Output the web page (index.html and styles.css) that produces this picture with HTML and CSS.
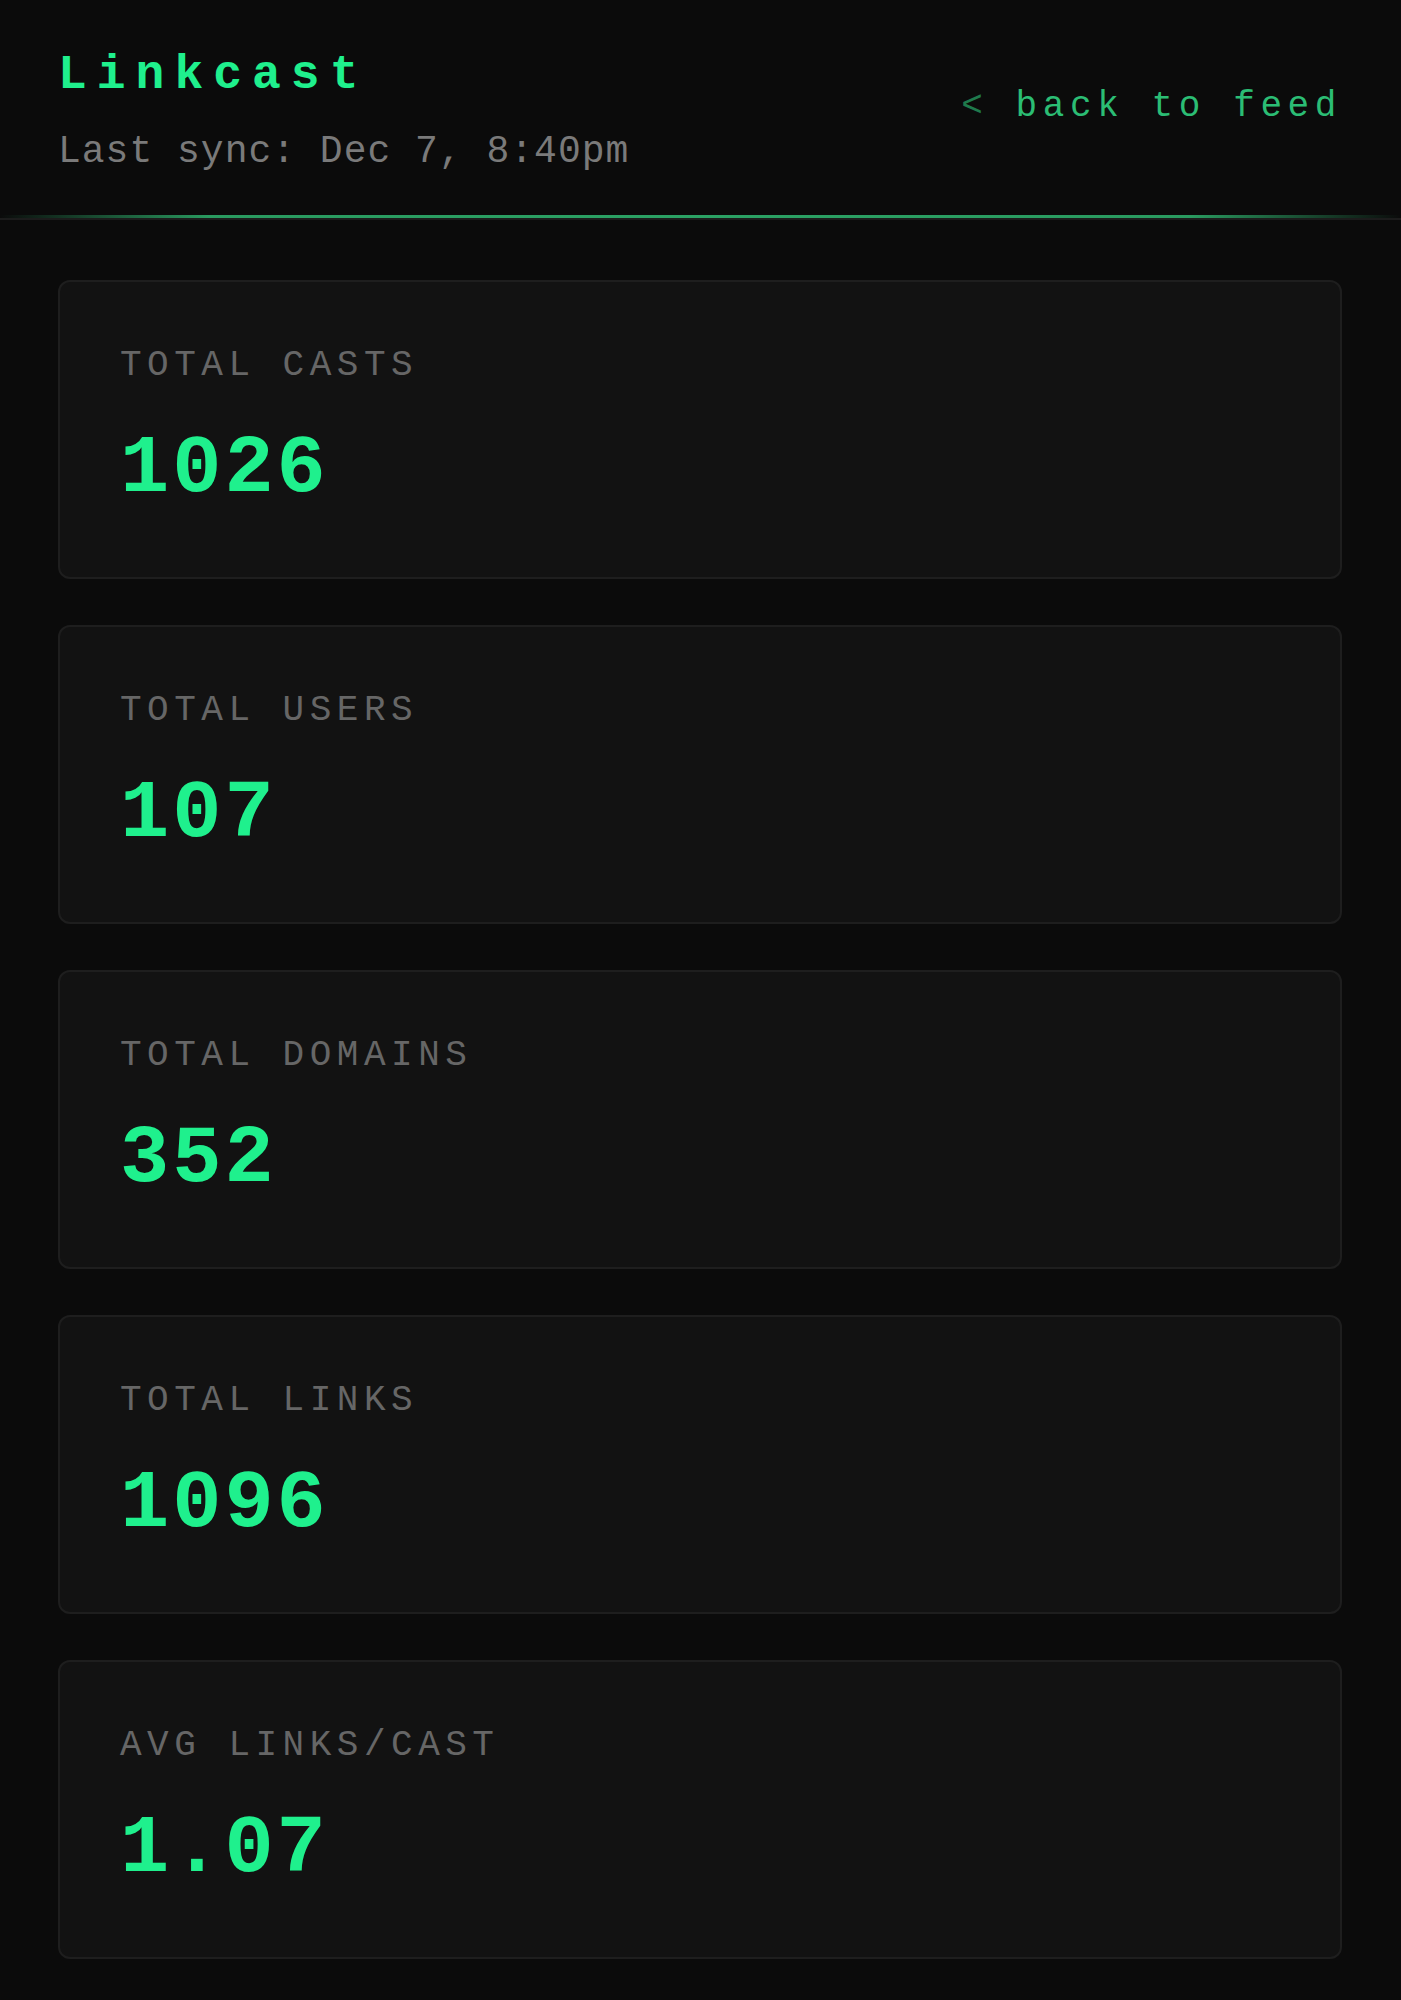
FILE: index.html
```html
<!DOCTYPE html>
<html lang="en">
<head>
<meta charset="utf-8">
<title>Linkcast — Stats</title>
<link rel="stylesheet" href="styles.css">
</head>
<body>
<header class="header">
  <div class="header-bar">
    <div class="brand">
      <h1 class="title">Linkcast</h1>
      <p class="sync">Last sync: Dec 7, 8:40pm</p>
    </div>
    <a class="back" href="#"><span class="back-arrow">&lt;</span> back to feed</a>
  </div>
  <div class="glow"></div>
</header>
<main class="stats">
  <section class="card">
    <div class="label">TOTAL CASTS</div>
    <div class="value">1026</div>
  </section>
  <section class="card">
    <div class="label">TOTAL USERS</div>
    <div class="value">107</div>
  </section>
  <section class="card">
    <div class="label">TOTAL DOMAINS</div>
    <div class="value">352</div>
  </section>
  <section class="card">
    <div class="label">TOTAL LINKS</div>
    <div class="value">1096</div>
  </section>
  <section class="card">
    <div class="label">AVG LINKS/CAST</div>
    <div class="value">1.07</div>
  </section>
</main>
</body>
</html>
```
FILE: styles.css
```css
* { box-sizing: border-box; }

html, body {
  margin: 0;
  padding: 0;
  background: #0b0b0b;
  font-family: "Courier New", "Nimbus Mono PS", "FreeMono", "Liberation Mono", monospace;
}

.header {
  border-bottom: 2px solid #1c1c1c;
}

.header-bar {
  display: flex;
  justify-content: space-between;
  align-items: center;
  padding: 47px 59px 40px 58px;
}

.title {
  margin: 0;
  font-size: 48px;
  line-height: 56px;
  font-weight: 700;
  letter-spacing: 10px;
  color: #1ff08d;
}

.sync {
  margin: 26px 0 0;
  font-size: 38px;
  line-height: 46px;
  letter-spacing: 1px;
  color: #7a7a7a;
}

.back {
  font-size: 36px;
  line-height: 44px;
  letter-spacing: 5.6px;
  color: #2bbd74;
  text-decoration: none;
  margin-top: -8px;
}

.back-arrow {
  color: #1f7a4c;
}

.glow {
  height: 3px;
  background: linear-gradient(90deg, rgba(31,240,141,0) 0%, rgba(45,170,105,0.9) 15%, rgba(45,170,105,0.95) 50%, rgba(45,170,105,0.9) 85%, rgba(31,240,141,0) 100%);
}

.stats {
  display: flex;
  flex-direction: column;
  gap: 46px;
  padding: 60px 59px 40px 58px;
}

.card {
  background: #121212;
  border: 2px solid #1e1e1e;
  border-radius: 12px;
  padding: 62px 60px 66px 60px;
}

.label {
  font-size: 36px;
  line-height: 44px;
  letter-spacing: 5.5px;
  color: #666666;
}

.value {
  margin-top: 41px;
  font-size: 82px;
  line-height: 82px;
  font-weight: 700;
  letter-spacing: 3px;
  color: #1ff08d;
}
```
